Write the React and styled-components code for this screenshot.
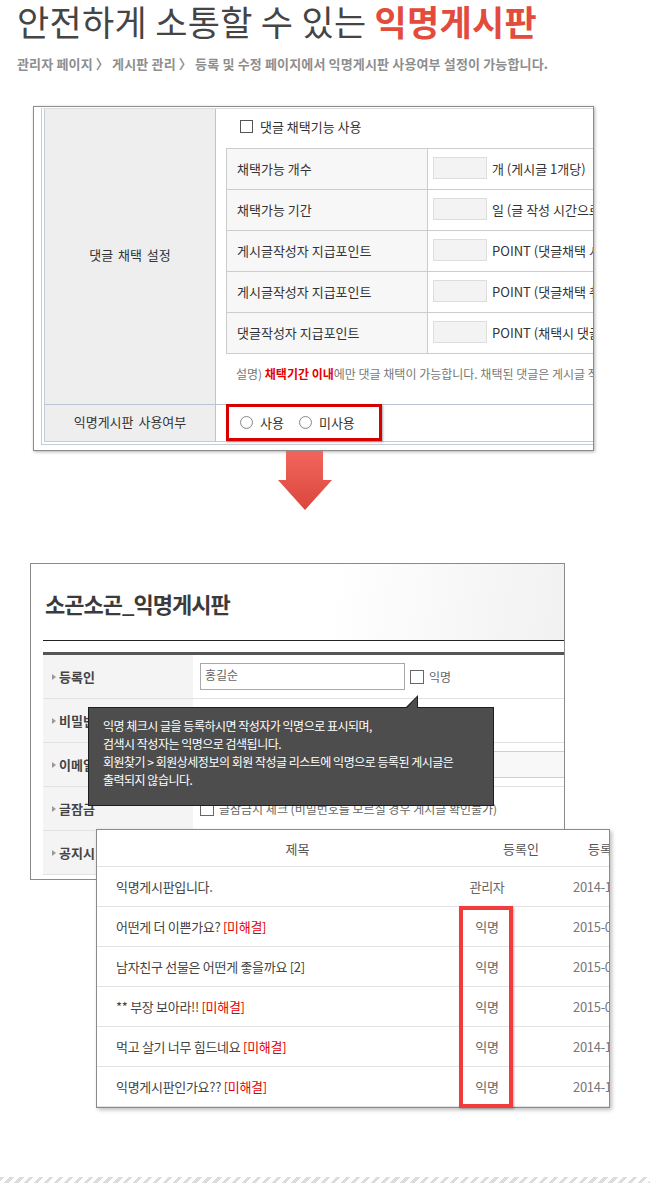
import styled, { createGlobalStyle } from 'styled-components';

const GlobalStyle = createGlobalStyle`
  html, body {
    margin: 0;
    padding: 0;
    background: #fff;
  }
  body {
    font-family: "Noto Sans CJK KR", "Noto Sans", sans-serif;
    color: #444;
  }
  * {
    box-sizing: border-box;
  }
`;

const options = [
  { name: '채택가능 개수', note: '개 (게시글 1개당)' },
  { name: '채택가능 기간', note: '일 (글 작성 시간으로부터)' },
  { name: '게시글작성자 지급포인트', note: 'POINT (댓글채택 시 지급)' },
  { name: '게시글작성자 지급포인트', note: 'POINT (댓글채택 취소 시 차감)' },
  { name: '댓글작성자 지급포인트', note: 'POINT (채택시 댓글작성자에게 지급)' },
];

const posts = [
  { title: '익명게시판입니다.', author: '관리자', date: '2014-12-01' },
  { title: '어떤게 더 이쁜가요?', tag: '[미해결]', author: '익명', date: '2015-01-12' },
  { title: '남자친구 선물은 어떤게 좋을까요 [2]', author: '익명', date: '2015-01-08' },
  { title: '** 부장 보아라!!', tag: '[미해결]', author: '익명', date: '2015-01-05' },
  { title: '먹고 살기 너무 힘드네요', tag: '[미해결]', author: '익명', date: '2014-12-28' },
  { title: '익명게시판인가요??', tag: '[미해결]', author: '익명', date: '2014-12-15' },
];

export default function App() {
  return (
    <Page>
      <GlobalStyle />
      <Intro>
        <Title>
          안전하게 소통할 수 있는 <strong>익명게시판</strong>
        </Title>
        <Path>관리자 페이지 〉 게시판 관리 〉 등록 및 수정 페이지에서 익명게시판 사용여부 설정이 가능합니다.</Path>
      </Intro>

      <SettingsPanel>
        <Frame>
          <SettingRow $h={295}>
            <SettingLabel>댓글 채택 설정</SettingLabel>
            <SettingBody>
              <CheckLine>
                <CheckBox />
                댓글 채택기능 사용
              </CheckLine>
              <OptionTable>
                {options.map((o, i) => (
                  <OptionRow key={i}>
                    <OptionName>{o.name}</OptionName>
                    <OptionValue>
                      <FieldBox />
                      {o.note}
                    </OptionValue>
                  </OptionRow>
                ))}
              </OptionTable>
              <Description>
                설명) <strong>채택기간 이내</strong>에만 댓글 채택이 가능합니다. 채택된 댓글은 게시글 작성자만 취소할 수 있습니다.
              </Description>
            </SettingBody>
          </SettingRow>
          <SettingRow $h={37}>
            <SettingLabel>익명게시판 사용여부</SettingLabel>
            <SettingBody>
              <RadioBox>
                <RadioItem>
                  <Radio />
                  사용
                </RadioItem>
                <RadioItem>
                  <Radio />
                  미사용
                </RadioItem>
              </RadioBox>
            </SettingBody>
          </SettingRow>
        </Frame>
      </SettingsPanel>

      <Arrow width="54" height="60" viewBox="0 0 54 60">
        <defs>
          <linearGradient id="arrowFill" x1="0" y1="0" x2="0" y2="1">
            <stop offset="0" stopColor="#f3655c" />
            <stop offset="1" stopColor="#d9473d" />
          </linearGradient>
        </defs>
        <polygon points="8,0 45,0 45,29 54,29 27,59 0,29 8,29" fill="url(#arrowFill)" />
      </Arrow>

      <BoardPanel>
        <BoardHead>소곤소곤_익명게시판</BoardHead>
        <ThickRule />
        <FormRow>
          <FormLabel>등록인</FormLabel>
          <FormValue>
            <TextField $w={205}>홍길순</TextField>
            <CheckBox $small />
            익명
          </FormValue>
        </FormRow>
        <FormRow>
          <FormLabel>비밀번호</FormLabel>
          <FormValue>
            <TextField $w={205} />
          </FormValue>
        </FormRow>
        <FormRow>
          <FormLabel>이메일</FormLabel>
          <FormValue>
            <TextField $w={400} $soft />
          </FormValue>
        </FormRow>
        <FormRow>
          <FormLabel>글잠금</FormLabel>
          <FormValue>
            <CheckBox $small />
            글잠금시 체크 (비밀번호를 모르실 경우 게시글 확인불가)
          </FormValue>
        </FormRow>
        <FormRow>
          <FormLabel>공지시 상단고정</FormLabel>
          <FormValue />
        </FormRow>
        <Tooltip>
          익명 체크시 글을 등록하시면 작성자가 익명으로 표시되며,
          <br />
          검색시 작성자는 익명으로 검색됩니다.
          <br />
          회원찾기 &gt; 회원상세정보의 회원 작성글 리스트에 익명으로 등록된 게시글은
          <br />
          출력되지 않습니다.
        </Tooltip>
      </BoardPanel>

      <PostTable>
        <HeadRow>
          <HeadCell>제목</HeadCell>
          <HeadCell>등록인</HeadCell>
          <HeadCell $left>등록일</HeadCell>
        </HeadRow>
        {posts.map((p, i) => (
          <PostRow key={i}>
            <PostTitle>
              {p.title}
              {p.tag && <Tag> {p.tag}</Tag>}
            </PostTitle>
            <PostAuthor>{p.author}</PostAuthor>
            <PostDate>{p.date}</PostDate>
          </PostRow>
        ))}
        <ColumnMark />
      </PostTable>

      <Hatch />
    </Page>
  );
}

const Page = styled.div`
  width: 650px;
  overflow: hidden;
`;

const Intro = styled.header`
  padding-left: 17px;
`;

const Title = styled.h1`
  margin: 0;
  font-size: 35px;
  line-height: 42px;
  font-weight: 400;
  color: #454545;
  letter-spacing: 0.3px;
  white-space: nowrap;

  strong {
    color: #e24b3e;
    font-weight: 700;
  }
`;

const Path = styled.p`
  margin: 12px 0 0;
  font-size: 13px;
  line-height: 20px;
  font-weight: 700;
  color: #8e8e8e;
  letter-spacing: 0.15px;
  white-space: nowrap;
`;

const SettingsPanel = styled.div`
  margin: 32px 0 0 33px;
  width: 561px;
  padding: 1px 0 5px 7px;
  border: 1px solid #8c8c8c;
  background: #fff;
  box-shadow: 1px 1px 3px rgba(0, 0, 0, 0.3);
  overflow: hidden;
`;

const Frame = styled.div`
  border-left: 4px double #c3ccd8;
  border-top: 1px solid #dcdcdc;
  border-bottom: 4px double #c3ccd8;
`;

const SettingRow = styled.div`
  display: flex;
  height: ${(p) => p.$h}px;

  & + & {
    border-top: 1px solid #b9c5d4;
  }
`;

const SettingLabel = styled.div`
  flex: 0 0 171px;
  display: flex;
  align-items: center;
  justify-content: center;
  padding-bottom: 4px;
  background: #eee;
  border-right: 1px solid #b9c5d4;
  font-size: 13px;
  color: #333;
  word-spacing: 2px;
`;

const SettingBody = styled.div`
  flex: 1;
  display: flex;
  flex-direction: column;
  padding-left: 10px;
  white-space: nowrap;
  font-size: 13px;
  color: #333;
`;

const CheckLine = styled.div`
  display: flex;
  align-items: center;
  gap: 7px;
  height: 35px;
  padding-left: 14px;
`;

const CheckBox = styled.span`
  flex: none;
  width: ${(p) => (p.$small ? 14 : 13)}px;
  height: ${(p) => (p.$small ? 14 : 13)}px;
  border: 1px solid ${(p) => (p.$small ? '#666' : '#555')};
  background: #fff;
`;

const OptionTable = styled.div`
  margin-top: 4px;
  width: 420px;
  border: 1px solid #ccc;
`;

const OptionRow = styled.div`
  display: grid;
  grid-template-columns: 201px 1fr;
  height: 40px;

  & + & {
    border-top: 1px solid #ccc;
    height: 41px;
  }
`;

const OptionName = styled.div`
  display: flex;
  align-items: center;
  padding: 0 0 2px 10px;
  background: #f7f7f7;
  border-right: 1px solid #ccc;
`;

const OptionValue = styled.div`
  display: flex;
  align-items: center;
  gap: 5px;
  padding: 0 0 2px 5px;
`;

const FieldBox = styled.span`
  flex: none;
  width: 54px;
  height: 22px;
  background: #f3f3f3;
  border: 1px solid #ddd;
`;

const Description = styled.p`
  margin: 10px 0 0;
  padding-left: 10px;
  font-size: 12px;
  line-height: 20px;
  color: #777;

  strong {
    color: #e60000;
    font-weight: 700;
  }
`;

const RadioBox = styled.div`
  display: inline-flex;
  align-items: center;
  gap: 15px;
  width: 156px;
  height: 37px;
  margin-top: -1px;
  padding-left: 11px;
  border: 3px solid #d60000;
  box-shadow: 1px 1px 2px rgba(0, 0, 0, 0.35);
`;

const RadioItem = styled.label`
  display: inline-flex;
  align-items: center;
  gap: 7px;
`;

const Radio = styled.span`
  width: 13px;
  height: 13px;
  border-radius: 50%;
  border: 1px solid #8a8a8a;
  background: radial-gradient(circle at 50% 40%, #fff 45%, #e6e6e6 100%);
`;

const Arrow = styled.svg`
  display: block;
  margin-left: 278px;
`;

const BoardPanel = styled.section`
  position: relative;
  margin: 52px 0 0 30px;
  width: 535px;
  height: 317px;
  padding-left: 12px;
  border: 1px solid #8a8a8a;
  background: #fff;
  overflow: hidden;
`;

const BoardHead = styled.h2`
  margin: 0;
  height: 77px;
  display: flex;
  align-items: center;
  padding: 2px 0 0 2px;
  border-bottom: 1px solid #222;
  background: linear-gradient(100deg, #fff 55%, #f1f1f1 100%);
  font-size: 22px;
  font-weight: 700;
  letter-spacing: -1px;
  color: #3b3b3b;
`;

const ThickRule = styled.div`
  margin-top: 11px;
  height: 3px;
  background: #555;
`;

const FormRow = styled.div`
  display: flex;
  height: 44px;
  border-bottom: 1px solid #e2e2e2;
`;

const FormLabel = styled.div`
  flex: 0 0 150px;
  display: flex;
  align-items: center;
  padding-left: 9px;
  background: #f4f4f4;
  font-size: 13px;
  font-weight: 700;
  color: #444;
  white-space: nowrap;

  &::before {
    content: '';
    margin-right: 3px;
    border-left: 4px solid #9a9a9a;
    border-top: 3px solid transparent;
    border-bottom: 3px solid transparent;
  }
`;

const FormValue = styled.div`
  flex: 1;
  display: flex;
  align-items: center;
  gap: 5px;
  padding-left: 7px;
  font-size: 12px;
  color: #666;
  white-space: nowrap;
`;

const TextField = styled.div`
  flex: none;
  width: ${(p) => p.$w}px;
  height: 27px;
  padding: 3px 4px;
  border: 1px solid ${(p) => (p.$soft ? '#cfcfcf' : '#a9a9a9')};
  background: ${(p) => (p.$soft ? '#f8f8f8' : '#fff')};
  font-size: 12px;
  line-height: 16px;
  color: #666;
`;

const Tooltip = styled.div`
  position: absolute;
  left: 57px;
  top: 143px;
  width: 406px;
  height: 99px;
  padding: 9px 14px 0;
  background: #4d4d4d;
  border: 1px solid #1f1f1f;
  color: #fff;
  font-size: 12px;
  line-height: 18px;
  letter-spacing: -0.5px;
  white-space: nowrap;

  &::before,
  &::after {
    content: '';
    position: absolute;
    width: 0;
    height: 0;
    border-left-style: solid;
    border-bottom-style: solid;
    border-left-color: transparent;
  }

  &::before {
    left: 316px;
    top: -13px;
    border-left-width: 13px;
    border-bottom-width: 13px;
    border-bottom-color: #1f1f1f;
  }

  &::after {
    left: 318px;
    top: -11px;
    border-left-width: 10px;
    border-bottom-width: 11px;
    border-bottom-color: #4d4d4d;
  }
`;

const PostTable = styled.div`
  position: relative;
  margin: -51px 0 0 96px;
  width: 514px;
  border: 1px solid #8a8a8a;
  background: #fff;
  box-shadow: 2px 2px 4px rgba(0, 0, 0, 0.25);
`;

const HeadRow = styled.div`
  display: grid;
  grid-template-columns: 401px 46px 1fr;
  align-items: center;
  height: 37px;
  border-bottom: 1px solid #e3e3e3;
  font-size: 13px;
  color: #555;
  white-space: nowrap;
  overflow: hidden;
`;

const HeadCell = styled.div`
  text-align: ${(p) => (p.$left ? 'left' : 'center')};
  padding-left: ${(p) => (p.$left ? 44 : 0)}px;
`;

const PostRow = styled.div`
  display: grid;
  grid-template-columns: 343px 94px 1fr;
  align-items: center;
  height: 40px;
  border-bottom: 1px solid #e3e3e3;
  font-size: 13px;
  letter-spacing: -0.3px;
  white-space: nowrap;
  overflow: hidden;

  &:last-of-type {
    border-bottom: none;
  }
`;

const PostTitle = styled.div`
  padding-left: 19px;
  color: #444;
`;

const Tag = styled.span`
  color: #e80000;
`;

const PostAuthor = styled.div`
  text-align: center;
  color: #666;
`;

const PostDate = styled.div`
  padding-left: 39px;
  color: #777;
`;

const ColumnMark = styled.div`
  position: absolute;
  left: 362px;
  top: 76px;
  width: 54px;
  height: 202px;
  border: 4px solid #f23b3b;
  box-shadow: 1px 1px 2px rgba(0, 0, 0, 0.3);
`;

const Hatch = styled.div`
  margin-top: 69px;
  height: 6px;
  background: repeating-linear-gradient(135deg, #dcdcdc 0 3px, #fff 3px 7px);
`;
